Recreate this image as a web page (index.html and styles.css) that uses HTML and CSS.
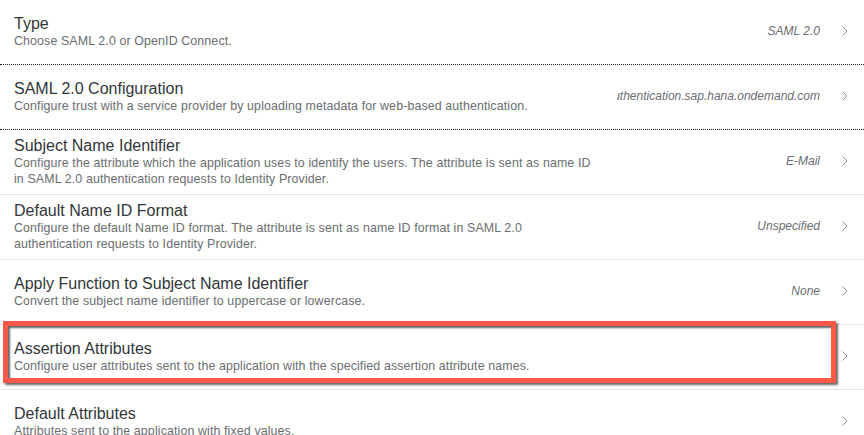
FILE: index.html
```html
<!DOCTYPE html>
<html lang="en">
<head>
<meta charset="utf-8">
<title>Trust configuration</title>
<link rel="stylesheet" href="styles.css">
</head>
<body>
<div class="list">
  <div class="row dotted first">
    <div class="text">
      <div class="title">Type</div>
      <div class="desc">Choose SAML 2.0 or OpenID Connect.</div>
    </div>
    <div class="value"><span>SAML 2.0</span></div>
    <svg class="chev" width="6" height="10" viewBox="0 0 6 10"><polyline points="0.5,0.5 5,5 0.5,9.5" /></svg>
  </div>
  <div class="row dotted">
    <div class="text">
      <div class="title">SAML 2.0 Configuration</div>
      <div class="desc">Configure trust with a service provider by uploading metadata for web-based authentication.</div>
    </div>
    <div class="value clip"><span>https://authentication.sap.hana.ondemand.com</span></div>
    <svg class="chev" width="6" height="10" viewBox="0 0 6 10"><polyline points="0.5,0.5 5,5 0.5,9.5" /></svg>
  </div>
  <div class="row">
    <div class="text">
      <div class="title">Subject Name Identifier</div>
      <div class="desc">Configure the attribute which the application uses to identify the users. The attribute is sent as name ID<br>in SAML 2.0 authentication requests to Identity Provider.</div>
    </div>
    <div class="value"><span>E-Mail</span></div>
    <svg class="chev" width="6" height="10" viewBox="0 0 6 10"><polyline points="0.5,0.5 5,5 0.5,9.5" /></svg>
  </div>
  <div class="row">
    <div class="text">
      <div class="title">Default Name ID Format</div>
      <div class="desc">Configure the default Name ID format. The attribute is sent as name ID format in SAML 2.0<br>authentication requests to Identity Provider.</div>
    </div>
    <div class="value"><span>Unspecified</span></div>
    <svg class="chev" width="6" height="10" viewBox="0 0 6 10"><polyline points="0.5,0.5 5,5 0.5,9.5" /></svg>
  </div>
  <div class="row">
    <div class="text">
      <div class="title">Apply Function to Subject Name Identifier</div>
      <div class="desc">Convert the subject name identifier to uppercase or lowercase.</div>
    </div>
    <div class="value"><span>None</span></div>
    <svg class="chev" width="6" height="10" viewBox="0 0 6 10"><polyline points="0.5,0.5 5,5 0.5,9.5" /></svg>
  </div>
  <div class="row highlighted">
    <div class="text">
      <div class="title">Assertion Attributes</div>
      <div class="desc">Configure user attributes sent to the application with the specified assertion attribute names.</div>
    </div>
    <div class="value"></div>
    <svg class="chev" width="6" height="10" viewBox="0 0 6 10"><polyline points="0.5,0.5 5,5 0.5,9.5" /></svg>
    <div class="marker"></div>
  </div>
  <div class="row">
    <div class="text">
      <div class="title">Default Attributes</div>
      <div class="desc">Attributes sent to the application with fixed values.</div>
    </div>
    <div class="value"></div>
    <svg class="chev" width="6" height="10" viewBox="0 0 6 10"><polyline points="0.5,0.5 5,5 0.5,9.5" /></svg>
  </div>
</div>
</body>
</html>
```
FILE: styles.css
```css
html, body {
  margin: 0;
  padding: 0;
  background: #ffffff;
  overflow: hidden;
}

body {
  font-family: "Liberation Sans", Arial, sans-serif;
  color: #32363a;
}

.list {
  display: flex;
  flex-direction: column;
}

.row {
  position: relative;
  display: flex;
  align-items: center;
  height: 64px;
  padding: 0 16px 0 14px;
  border-bottom: 1px solid #e5e5e5;
  flex-shrink: 0;
}

.row.dotted {
  border-bottom: 1px dotted #1a1a1a;
}

.text {
  flex: 1;
  min-width: 0;
  display: flex;
  flex-direction: column;
}

.title {
  font-size: 16px;
  line-height: 18px;
  color: #32363a;
}

.desc {
  font-size: 12.4px;
  letter-spacing: 0.12px;
  line-height: 16px;
  color: #6a6d70;
}

.value {
  display: flex;
  justify-content: flex-end;
  font-size: 12px;
  font-style: italic;
  color: #6a6d70;
  white-space: nowrap;
  margin-right: 22px;
  margin-top: -3px;
}

.value.clip {
  width: 203px;
  overflow: hidden;
  flex-shrink: 0;
}

.value span {
  flex-shrink: 0;
}

.chev {
  flex-shrink: 0;
  margin-top: -3px;
}

.chev polyline {
  fill: none;
  stroke: #8a9097;
  stroke-width: 1;
}

.marker {
  position: absolute;
  left: 3px;
  top: -4px;
  width: 833px;
  height: 62px;
  box-sizing: border-box;
  border: 5px solid #fe5848;
  box-shadow: 2px 2px 2px rgba(0, 0, 0, 0.6), inset 2px 2px 2px rgba(0, 0, 0, 0.6);
  pointer-events: none;
}
```
